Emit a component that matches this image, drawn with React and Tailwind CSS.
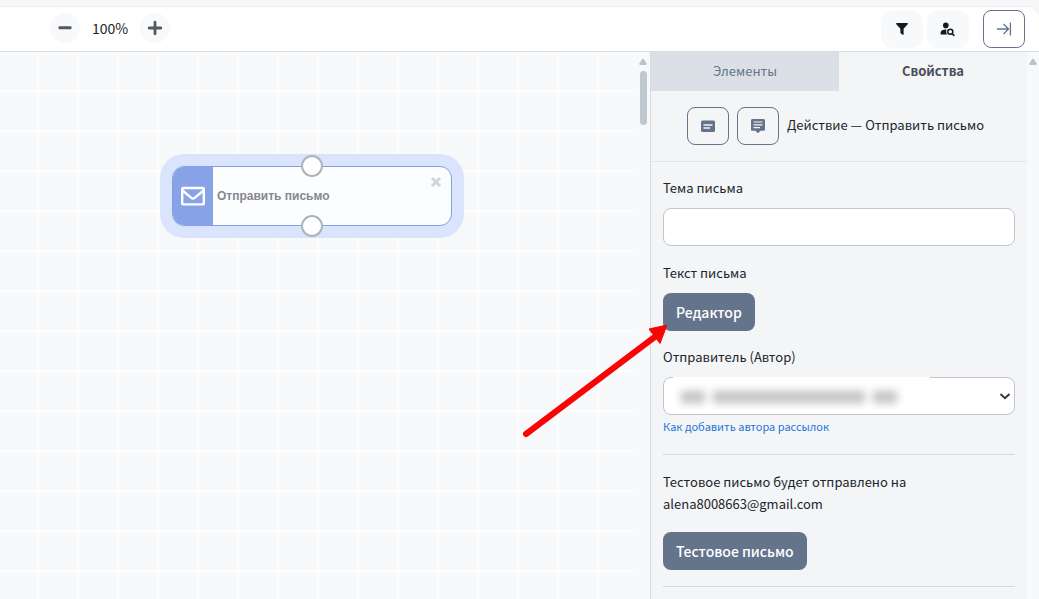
import React, { useState } from 'react'

const ScrollArrow = () => (
  <svg className="h-2 w-2" viewBox="0 0 8 8" aria-hidden="true">
    <path d="M3.2 1 Q4 .2 4.8 1 L7.6 5.4 Q8 7 6.8 7 H1.2 Q0 7 .4 5.4 Z" fill="#bcc2c8" />
  </svg>
)

const Header = () => {
  const [zoom, setZoom] = useState(100)

  return (
    <header className="bg-[#f7f7f7] pt-[6px]">
      <div className="flex h-[46px] items-center justify-between rounded-tr-xl border-y border-t-[#ececec] border-b-[#dadde0] bg-white pl-[50px] pr-[14px]">
        <div className="flex items-center gap-3 pb-[2px]">
          <button onClick={() => setZoom(zoom - 10)} aria-label="−" className="flex h-[30px] w-[30px] items-center justify-center rounded-full bg-[#f8f9fb]">
            <svg className="h-4 w-4" viewBox="0 0 16 16">
              <rect x="1.5" y="6.3" width="13" height="3" rx="1" fill="#55585c" />
            </svg>
          </button>
          <span className="w-9 text-center text-[14px] leading-5 text-[#212529]">{zoom}%</span>
          <button onClick={() => setZoom(zoom + 10)} aria-label="+" className="flex h-[30px] w-[30px] items-center justify-center rounded-full bg-[#f8f9fb]">
            <svg className="h-4 w-4" viewBox="0 0 16 16">
              <path d="M8 2.2v11.6M2.2 8h11.6" stroke="#55585c" strokeWidth="2.8" strokeLinecap="round" />
            </svg>
          </button>
        </div>

        <div className="flex items-center gap-1">
          <button aria-label="Фильтр" className="flex h-[38px] w-[42px] items-center justify-center rounded-xl bg-[#f8f9fb]">
            <svg className="h-3 w-3" viewBox="0 0 12 12">
              <path d="M.8 0h10.4c.7 0 1 .8.5 1.3L7.6 5.7v5.6c0 .6-.6.8-1 .5L4.7 10.3c-.2-.2-.3-.4-.3-.6v-4L.3 1.3C-.2.8.1 0 .8 0z" fill="#16191c" />
            </svg>
          </button>
          <button aria-label="Поиск" className="mr-[10px] flex h-[38px] w-[42px] items-center justify-center rounded-xl bg-[#f8f9fb]">
            <svg className="h-4 w-4" viewBox="0 0 16 16">
              <circle cx="5.8" cy="4.4" r="2.8" fill="#16191c" />
              <path d="M.6 13.4v-1.6c0-2 2.400-3.200 5.200-3.200h.8c-.7 1.500-.6 3.400.6 4.800z" fill="#16191c" />
              <circle cx="10.300" cy="10.800" r="2.500" fill="none" stroke="#16191c" strokeWidth="1.500" />
              <path d="M12.200 12.700l2.200 2.200" stroke="#16191c" strokeWidth="1.600" />
            </svg>
          </button>
          <button aria-label="Свернуть" className="flex h-[38px] w-[42px] items-center justify-center rounded-lg border border-[#64748b]">
            <svg className="h-4 w-4" viewBox="0 0 16 16" fill="none" stroke="#64748b" strokeWidth="1.3">
              <path d="M1 8h11M7.5 3l5 5-5 5M14.4 1.5v13" />
            </svg>
          </button>
        </div>
      </div>
    </header>
  )
}

const Port = () => <span className="h-[22px] w-[22px] rounded-full border-2 border-[#adb3ba] bg-white" />

const Canvas = () => (
  <main className="flex min-w-0 flex-1 bg-[#f8f9fb]">
    <div className="relative flex-1 bg-[linear-gradient(to_right,#fdfdfe_2px,transparent_2px),linear-gradient(to_bottom,#fdfdfe_2px,transparent_2px)] bg-[size:40px_40px] bg-[position:37px_38px]">
      <div className="absolute left-[160px] top-[102px] rounded-[24px] bg-[#dae4fc] p-3">
        <div className="relative flex h-[60px] w-[280px] overflow-hidden rounded-xl border border-[#84a0e0] bg-[#fcfdfe]">
          <div className="flex w-10 items-center justify-center bg-[#87a2e6]">
            <svg className="h-6 w-6" viewBox="0 0 24 24" fill="none" stroke="#fff" strokeWidth="2.4">
              <rect x="1.2" y="4" width="21.6" height="16.4" rx="1" />
              <path d="M1.500 6.500l8.800 7.400c1 .8 2.400.8 3.400 0l8.800-7.400" />
            </svg>
          </div>
          <div className="flex flex-1 items-center px-1">
            <span className="font-['Liberation_Sans',sans-serif] text-[12px] font-bold text-[#85888f]">Отправить письмо</span>
          </div>
          <button aria-label="Удалить" className="flex h-[30px] w-[30px] items-center justify-center">
            <svg className="h-3 w-3" viewBox="0 0 12 12">
              <path d="M2 2l8 8M10 2l-8 8" stroke="#d2d4d7" strokeWidth="3" />
            </svg>
          </button>
        </div>
        <div className="absolute inset-x-0 inset-y-px flex flex-col items-center justify-between">
          <Port />
          <Port />
        </div>
      </div>
    </div>
    <div className="flex w-[14px] flex-col items-center gap-[5px] pt-[6px]">
      <ScrollArrow />
      <div className="h-[54px] w-[7px] rounded-full bg-[#bfc8cf]" />
    </div>
  </main>
)

const Arrow = () => (
  <svg className="pointer-events-none absolute right-full top-8 -mr-1 h-[114px] w-[144px]" viewBox="0 0 144 114" aria-hidden="true">
    <path d="M3 109L133 11" stroke="#f90505" strokeWidth="6" strokeLinecap="round" />
    <path d="M144 0L126 4L137 18.5Z" fill="#f90505" stroke="#f90505" strokeWidth="1" />
  </svg>
)

const primaryButton = 'h-[38px] rounded-lg bg-[#64748b] px-[13px] text-[14px] leading-5 font-medium text-white'
const squareButton = 'flex h-[38px] w-[42px] items-center justify-center rounded-lg border border-[#64748b]'

const Properties = () => {
  const [tab, setTab] = useState('props')
  const tabClass = (name) =>
    tab === name ? 'flex-1 pb-[2px] font-bold text-[#495057]' : 'flex-1 pb-[2px] bg-[#dae0e5] text-[#64748b]'

  return (
    <aside className="flex w-[389px] shrink-0 border-l border-[#d5dade] bg-[#f3f5f7]">
      <div className="flex-1">
        <div className="flex h-[39px]">
          <button className={tabClass('elements')} onClick={() => setTab('elements')}>Элементы</button>
          <button className={tabClass('props')} onClick={() => setTab('props')}>Свойства</button>
        </div>

        <div className="flex items-center gap-2 border-b border-[#e2e5e9] py-4 pl-9">
          <button aria-label="Карточка" className={squareButton}>
            <svg className="h-4 w-4" viewBox="0 0 16 16">
              <rect x="1" y="2.5" width="14" height="11.5" rx="1.5" fill="#64748b" />
              <path d="M3.5 7h9M3.5 10h6.5" stroke="#f3f5f7" strokeWidth="1.3" />
            </svg>
          </button>
          <button aria-label="Комментарий" className={squareButton}>
            <svg className="h-4 w-4" viewBox="0 0 16 16">
              <path d="M2.5 1h11c.8 0 1.5.6 1.5 1.4v9c0 .8-.7 1.4-1.5 1.4h-3L8 15.2l-2.5-2.4h-3C1.7 12.8 1 12.2 1 11.4v-9C1 1.6 1.7 1 2.5 1z" fill="#64748b" />
              <path d="M3.5 4h9M3.5 6.8h9M3.5 9.6h6.5" stroke="#f3f5f7" strokeWidth="1.2" />
            </svg>
          </button>
          <span className="pb-[2px]">Действие — Отправить письмо</span>
        </div>

        <form className="p-3" onSubmit={(e) => e.preventDefault()}>
          <label htmlFor="subject" className="mt-[3px] block">Тема письма</label>
          <input id="subject" type="text" className="mt-[9px] block h-[38px] w-full rounded-lg border border-[#c0c6cd] bg-white px-3 outline-none" />

          <p className="mt-4">Текст письма</p>
          <div className="relative mt-[9px]">
            <button type="button" className={primaryButton}>Редактор</button>
            <Arrow />
          </div>

          <label htmlFor="sender" className="mt-[15px] block">Отправитель (Автор)</label>
          <div className="relative mt-[9px]">
            <select id="sender" className="block h-[38px] w-full appearance-none rounded-lg border border-[#c0c6cd] bg-white px-3 outline-none">
              <option></option>
            </select>
            <div className="pointer-events-none absolute left-[10px] top-0 flex h-9 w-[257px] items-center gap-2 bg-white pl-2 pt-1" aria-hidden="true">
              <span className="h-3 w-6 bg-[#a4a6aa] opacity-70 blur-[4px]" />
              <span className="h-3 w-[152px] bg-[#a4a6aa] opacity-70 blur-[4px]" />
              <span className="h-3 w-6 bg-[#a4a6aa] opacity-70 blur-[4px]" />
            </div>
            <svg className="pointer-events-none absolute right-1 top-[13px] h-3 w-3" viewBox="0 0 12 12">
              <path d="M1.5 4L6 8.2L10.5 4" fill="none" stroke="#343a40" strokeWidth="2" />
            </svg>
          </div>
          <a href="#" className="mt-[3px] block text-[11px] leading-4 text-[#2376d8]">Как добавить автора рассылок</a>

          <hr className="mt-5 border-[#d5d9dd]" />
          <p className="mt-4">Тестовое письмо будет отправлено на alena8008663@gmail.com</p>
          <button type="button" className={'mt-[17px] block ' + primaryButton}>Тестовое письмо</button>
          <hr className="mt-4 border-[#d5d9dd]" />
        </form>
      </div>
      <div className="flex w-3 justify-center bg-[#f8f9fb] pt-[6px]">
        <ScrollArrow />
      </div>
    </aside>
  )
}

const App = () => {
  return (
    <div className="flex min-h-screen flex-col bg-[#f8f9fb] font-['Noto_Sans_CJK_SC',sans-serif] text-[13px] leading-[22px] text-[#212529]">
      <Header />
      <div className="flex flex-1">
        <Canvas />
        <Properties />
      </div>
    </div>
  )
}

export default App
